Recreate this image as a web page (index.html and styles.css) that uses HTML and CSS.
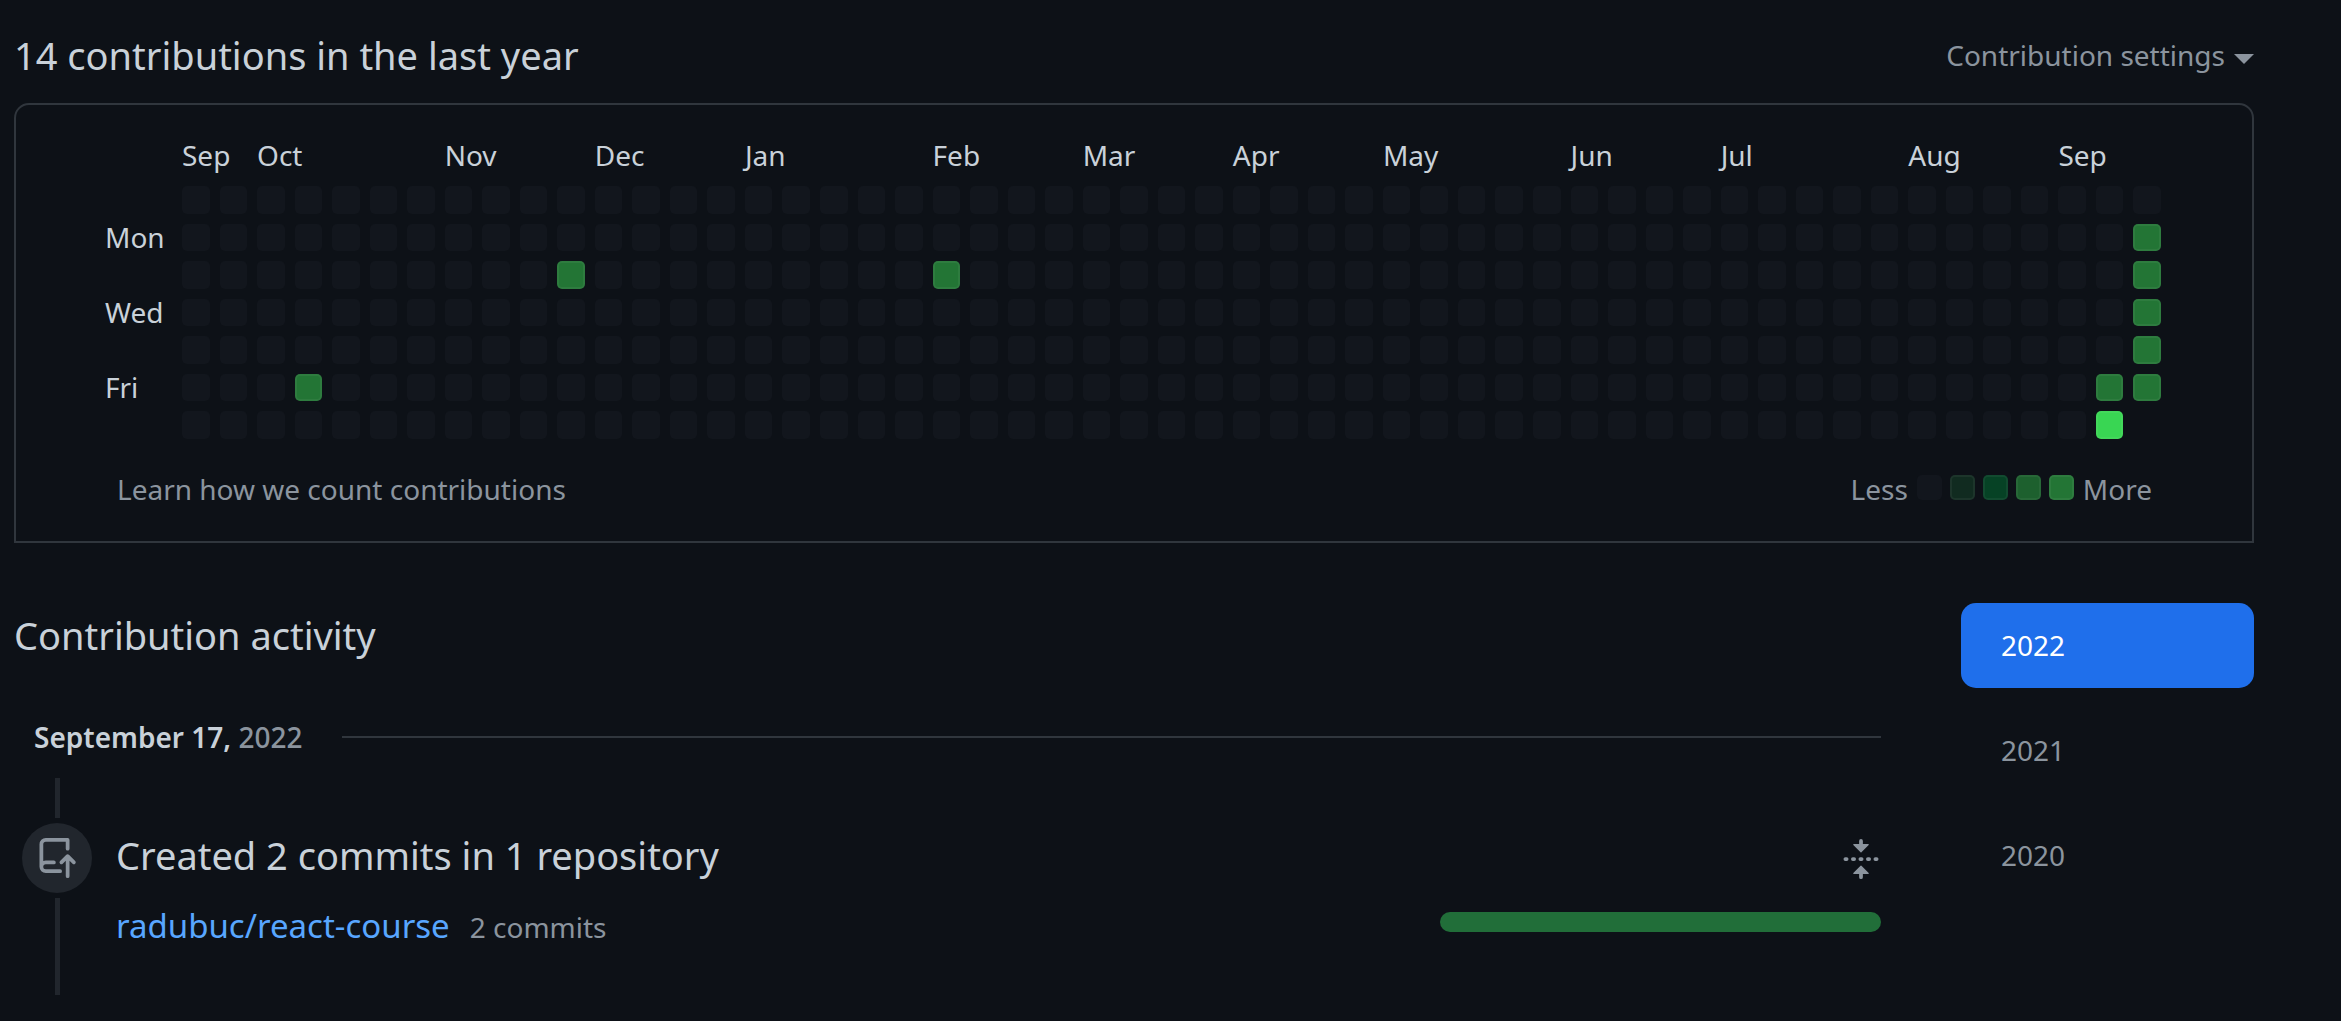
FILE: index.html
```
<!DOCTYPE html>
<html lang="en">
<head>
<meta charset="utf-8">
<title>Contributions</title>
<link rel="stylesheet" href="styles.css">
</head>
<body>
<main class="page">
  <section class="overview">
    <header class="overview-head">
      <h2 class="title">14 contributions in the last year</h2>
      <button class="settings" type="button">Contribution settings<span class="caret"></span></button>
    </header>
    <div class="card">
      <div class="calendar" id="calendar"></div>
      <footer class="card-foot">
        <a class="muted-link" href="#">Learn how we count contributions</a>
        <div class="legend">
          <span>Less</span>
          <ul class="swatches">
            <li class="swatch"></li>
            <li class="swatch level-1"></li>
            <li class="swatch level-2"></li>
            <li class="swatch level-3"></li>
            <li class="swatch level-4"></li>
          </ul>
          <span>More</span>
        </div>
      </footer>
    </div>
  </section>

  <div class="columns">
    <section class="activity">
      <h2 class="title">Contribution activity</h2>
      <h3 class="date"><span>September 17, <span class="year">2022</span></span></h3>
      <article class="event">
        <div class="rail">
          <span class="badge">
            <svg class="icon" viewBox="0 0 16 16" aria-hidden="true"><path d="M1 2.5A2.5 2.5 0 013.5 0h8.75a.75.75 0 01.75.75v3.5a.75.75 0 01-1.5 0V1.5h-8a1 1 0 00-1 1v6.708A2.492 2.492 0 013.5 9h3.25a.75.75 0 010 1.5H3.5a1 1 0 100 2h5.75a.75.75 0 010 1.5H3.5A2.5 2.5 0 011 11.5v-9zm13.23 7.79a.75.75 0 001.06-1.06l-2.505-2.505a.75.75 0 00-1.06 0L9.22 9.229a.75.75 0 001.06 1.061l1.225-1.224v6.184a.75.75 0 001.5 0V9.066l1.224 1.224z"/></svg>
          </span>
        </div>
        <div class="event-body">
          <div class="event-head">
            <h4 class="title">Created 2 commits in 1 repository</h4>
            <button class="fold" type="button" aria-label="Collapse">
              <svg class="icon" viewBox="0 0 16 16" aria-hidden="true"><path d="M10.896 2H8.75V.75a.75.75 0 00-1.5 0V2H5.104a.25.25 0 00-.177.427l2.896 2.896a.25.25 0 00.354 0l2.896-2.896A.25.25 0 0010.896 2zM8.75 15.25a.75.75 0 01-1.5 0V14H5.104a.25.25 0 01-.177-.427l2.896-2.896a.25.25 0 01.354 0l2.896 2.896a.25.25 0 01-.177.427H8.75v1.25zm-6.5-6.5a.75.75 0 000-1.5h-.5a.75.75 0 000 1.5h.5zM6 8a.75.75 0 01-.75.75h-.5a.75.75 0 010-1.5h.5A.75.75 0 016 8zm2.25.75a.75.75 0 000-1.5h-.5a.75.75 0 000 1.5h.5zM12 8a.75.75 0 01-.75.75h-.5a.75.75 0 010-1.5h.5A.75.75 0 0112 8zm2.25.75a.75.75 0 000-1.5h-.5a.75.75 0 000 1.5h.5z"/></svg>
            </button>
          </div>
          <div class="repo">
            <p class="repo-name"><a class="repo-link" href="#">radubuc/react-course</a><a class="muted-link" href="#">2 commits</a></p>
            <div class="bar-track"><div class="bar" style="width: 100%"></div></div>
          </div>
        </div>
      </article>
    </section>

    <nav class="years" aria-label="Year">
      <a class="year-link selected" href="#">2022</a>
      <a class="year-link" href="#">2021</a>
      <a class="year-link" href="#">2020</a>
    </nav>
  </div>
</main>
<script src="calendar.js"></script>
</body>
</html>
```
FILE: styles.css
```
* {
  box-sizing: border-box;
}

body {
  margin: 0;
  background: #0d1117;
  color: #c9d1d9;
  font: 28px/40px "Segoe UI", "Noto Sans", sans-serif;
}

h2, h3, h4, p, ul {
  margin: 0;
  padding: 0;
}

a {
  text-decoration: none;
}

button {
  padding: 0;
  border: 0;
  background: none;
  font: inherit;
  cursor: pointer;
}

.page {
  padding: 27px 87px 26px 14px;
}

.title {
  font-size: 38px;
  font-weight: 400;
  line-height: 56px;
}

.overview-head {
  display: flex;
  align-items: center;
  justify-content: space-between;
  margin-bottom: 20px;
}

.settings {
  display: flex;
  align-items: center;
  gap: 9px;
  color: #8b949e;
}

.caret {
  margin-top: 8px;
  border: 10px solid transparent;
  border-top-color: #8b949e;
  border-bottom: 0;
}

.card {
  padding: 30px 91px 32px 89px;
  border: 2px solid #30363d;
  border-radius: 15px 15px 0 0;
}

.calendar {
  display: grid;
  grid-template-columns: 67px repeat(53, minmax(0, 1fr));
  gap: 10px;
}

.month,
.weekday {
  line-height: 24px;
  white-space: nowrap;
}

.month {
  grid-row: 1;
  padding: 8px 0 9px;
}

.weekday {
  grid-column: 1;
  align-self: center;
}

.day,
.swatch {
  aspect-ratio: 1;
  border: 2px solid transparent;
  border-radius: 5px;
  background: #12161d;
}

.level-1,
.level-2,
.level-3,
.level-4,
.level-5 {
  border-color: rgba(255, 255, 255, 0.05);
}

.level-1 { background-color: #112b20; }
.level-2 { background-color: #064225; }
.level-3 { background-color: #1d602e; }
.level-4 { background-color: #237535; }
.level-5 { background-color: #39d653; }

.card-foot {
  display: flex;
  justify-content: space-between;
  padding: 30px 9px 0 12px;
  color: #8b949e;
}

.muted-link {
  color: #8b949e;
}

.legend {
  display: flex;
  gap: 9px;
}

.swatches {
  display: flex;
  gap: 8px;
  padding-top: 6px;
  list-style: none;
}

.swatch {
  width: 25px;
  height: 25px;
}

.columns {
  display: flex;
  gap: 80px;
  margin-top: 60px;
}

.activity {
  flex: 1;
  padding-top: 4px;
}

.date {
  display: flex;
  align-items: center;
  gap: 40px;
  margin-top: 53px;
  padding-left: 20px;
  font-size: 28px;
  font-weight: 600;
  line-height: 42px;
}

.date::after {
  content: "";
  flex: 1;
  height: 2px;
  background: #30363d;
}

.year {
  color: #8b949e;
  font-weight: 500;
}

.event {
  display: flex;
  gap: 24px;
  margin-top: 20px;
  padding-left: 8px;
}

.rail {
  display: flex;
  flex-direction: column;
  align-items: center;
  gap: 5px;
}

.rail::before,
.rail::after {
  content: "";
  width: 5px;
  height: 40px;
  background: #21262d;
}

.rail::after {
  flex: 1;
}

.badge {
  display: grid;
  place-items: center;
  width: 70px;
  height: 70px;
  border-radius: 50%;
  background: #21262d;
}

.icon {
  display: block;
  width: 40px;
  height: 40px;
  fill: #8b949e;
}

.event-body {
  flex: 1;
  padding: 49px 0 42px;
}

.event-head,
.repo {
  display: flex;
  align-items: center;
  justify-content: space-between;
}

.fold {
  margin-top: 8px;
}

.repo {
  margin-top: 17px;
}

.repo-name {
  display: flex;
  align-items: baseline;
  gap: 20px;
  line-height: 52px;
}

.repo-link {
  color: #58a6ff;
  font-size: 33px;
}

.bar-track {
  width: 25%;
  margin-bottom: 8px;
}

.bar {
  height: 20px;
  border-radius: 10px;
  background: #216e39;
}

.years {
  display: flex;
  flex-direction: column;
  gap: 20px;
  width: 293px;
}

.year-link {
  padding: 22px 40px 23px;
  border-radius: 15px;
  color: #8b949e;
}

.year-link.selected {
  background: #1f6feb;
  color: #fff;
}
```
FILE: calendar.js
```
const WEEKS = 53;
const calendar = document.getElementById("calendar");

// Month name and the week column it starts at
const months = [
  ["Sep", 0], ["Oct", 2], ["Nov", 7], ["Dec", 11], ["Jan", 15], ["Feb", 20], ["Mar", 24],
  ["Apr", 28], ["May", 32], ["Jun", 37], ["Jul", 41], ["Aug", 46], ["Sep", 50]
];
const weekdays = [["Mon", 1], ["Wed", 3], ["Fri", 5]];

// Activity level by "week,day"
const levels = {
  "3,5": 4, "10,2": 4, "20,2": 4, "51,5": 4, "51,6": 5,
  "52,1": 4, "52,2": 4, "52,3": 4, "52,4": 4, "52,5": 4
};

function add(className, text) {
  const el = document.createElement("div");
  el.className = className;
  el.textContent = text;
  calendar.append(el);
  return el;
}

for (const [name, week] of months) {
  add("month", name).style.gridColumn = `${week + 2} / span 2`;
}
for (const [name, day] of weekdays) {
  add("weekday", name).style.gridRow = day + 2;
}
for (let week = 0; week < WEEKS; week++) {
  for (let day = 0; day < 7; day++) {
    if (week === WEEKS - 1 && day === 6) continue;
    const level = levels[`${week},${day}`];
    const cell = add(level ? `day level-${level}` : "day", "");
    cell.style.gridColumn = week + 2;
    cell.style.gridRow = day + 2;
  }
}
```
